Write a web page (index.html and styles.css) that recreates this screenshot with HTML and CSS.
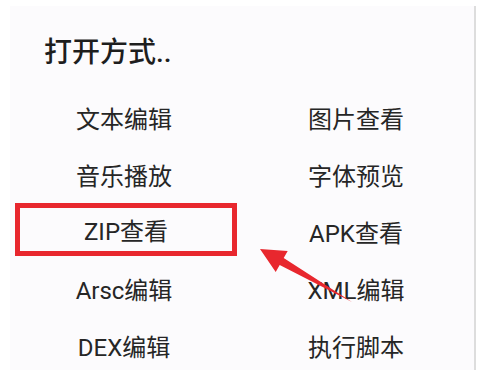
FILE: index.html
```html
<!DOCTYPE html>
<html lang="zh-CN">

<head>
  <meta charset="UTF-8">
  <meta name="viewport" content="width=device-width, initial-scale=1.0">
  <title>打开方式</title>
  <link rel="stylesheet" href="styles.css">
</head>

<body>
  <div class="dialog">
    <div class="title">打开方式..</div>
    <div class="items">
      <div class="item">文本编辑</div>
      <div class="item">图片查看</div>
      <div class="item">音乐播放</div>
      <div class="item">字体预览</div>
      <div class="item marked">ZIP查看</div>
      <div class="item">APK查看</div>
      <div class="item">Arsc编辑</div>
      <div class="item">XML编辑</div>
      <div class="item">DEX编辑</div>
      <div class="item">执行脚本</div>
    </div>
    <!-- annotation arrow pointing at the marked item -->
    <svg class="arrow" viewBox="250 243 120 70" width="120" height="70">
      <polygon points="260,249 287.7,251.1 283.7,258 352,302 279.7,265 275.7,271.9" fill="#e8272e"/>
    </svg>
  </div>
</body>

</html>
```

FILE: styles.css
```css
body {
  margin: 0;
  background: #fff;
  font-family: Roboto, "Noto Sans CJK SC", sans-serif;
}

.dialog {
  position: relative;
  box-sizing: border-box;
  width: 466px;
  height: 364px;
  margin: 6px 0 0 10px;
  padding-top: 33px;
  background: #fcfbfd;
  border-right: 2px solid #dddddd;
}

.title {
  font-size: 28px;
  line-height: 28px;
  font-weight: 500;
  color: #1e1e1e;
  padding-left: 34px;
}

.items {
  display: grid;
  grid-template-columns: 228px 1fr;
  grid-auto-rows: 57px;
  margin-top: 22px;
}

.item {
  display: flex;
  align-items: center;
  justify-content: center;
  font-size: 24px;
  color: #262626;
}

.item.marked {
  border: 5px solid #e8272e;
  margin: 0 1px 4px 5px;
}

.arrow {
  position: absolute;
  left: 240px;
  top: 237px;
}
```
